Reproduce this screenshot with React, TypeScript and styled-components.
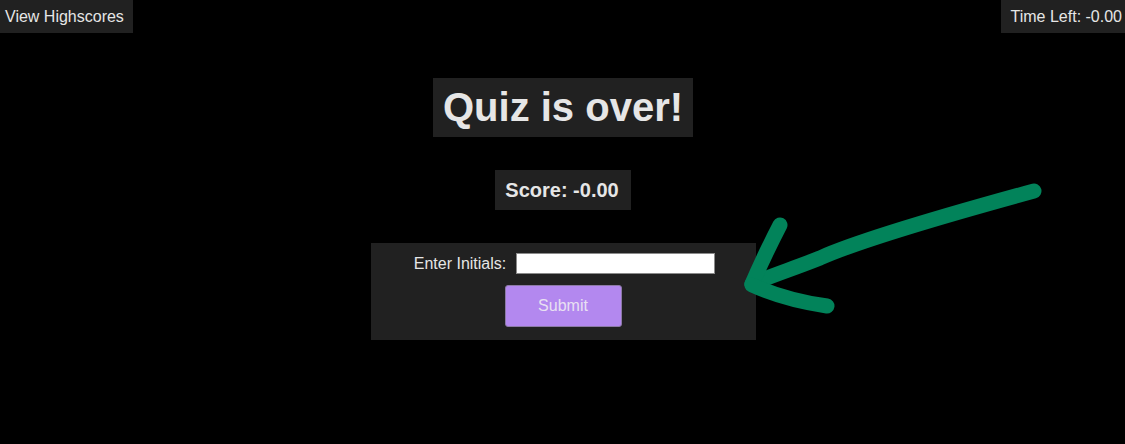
import React from "react";
import styled, { createGlobalStyle } from "styled-components";

const GlobalStyle = createGlobalStyle`
  html, body {
    margin: 0;
    padding: 0;
    background: #000;
  }
  body {
    font-family: "Liberation Sans", Arial, sans-serif;
    color: #e6e6e6;
    width: 1125px;
    height: 444px;
    overflow: hidden;
  }
`;

const Page = styled.div`
  position: relative;
  width: 1125px;
  height: 444px;
  background: #000;
`;

const Header = styled.header`
  display: flex;
  justify-content: space-between;
  align-items: flex-start;
`;

const Tag = styled.div<{ $pad: string }>`
  background: #212121;
  color: #e6e6e6;
  font-size: 16px;
  line-height: 19px;
  padding: ${(p) => p.$pad};
  white-space: nowrap;
`;

const Main = styled.main`
  display: flex;
  flex-direction: column;
  align-items: center;
`;

const Title = styled.h1`
  margin: 45px 0 0 1px;
  background: #212121;
  font-size: 40px;
  font-weight: bold;
  line-height: 47px;
  padding: 6px 10px 6px 10px;
  color: #e6e6e6;
`;

const Score = styled.h2`
  margin: 33px 0 0 1px;
  background: #212121;
  font-size: 20px;
  font-weight: bold;
  line-height: 24px;
  padding: 8px 12px 8px 10px;
  color: #e6e6e6;
`;

const Form = styled.form`
  margin: 33px 0 0 2px;
  width: 385px;
  box-sizing: border-box;
  background: #212121;
  padding: 10px 0 13px;
  display: flex;
  flex-direction: column;
  align-items: center;
  gap: 11px;
`;

const Row = styled.div`
  display: flex;
  align-items: center;
  gap: 10px;
  margin-left: 2px;
`;

const Label = styled.label`
  font-size: 16px;
  color: #e6e6e6;
`;

const Input = styled.input`
  width: 199px;
  height: 21px;
  box-sizing: border-box;
  border: 1px solid #8a8a8a;
  background: #fff;
  padding: 0 4px;
  font-family: "Liberation Sans", Arial, sans-serif;
`;

const Button = styled.button`
  width: 117px;
  height: 42px;
  background: #b388ef;
  border: 1px solid #8c7aa6;
  border-radius: 3px;
  color: #e8e0f2;
  font-family: "Liberation Sans", Arial, sans-serif;
  font-size: 16px;
  margin-right: 1px;
`;

const Arrow = styled.svg`
  position: absolute;
  left: 0;
  top: 0;
  width: 1125px;
  height: 444px;
  pointer-events: none;
`;

export default function App() {
  return (
    <Page>
      <GlobalStyle />
      <Header>
        <Tag $pad="7px 9px 7px 5px">View Highscores</Tag>
        <Tag $pad="7px 3px 7px 10px">Time Left: -0.00</Tag>
      </Header>
      <Main>
        <Title>Quiz is over!</Title>
        <Score>Score: -0.00</Score>
        <Form onSubmit={(e) => e.preventDefault()}>
          <Row>
            <Label htmlFor="initials">Enter Initials:</Label>
            <Input id="initials" type="text" />
          </Row>
          <Button type="submit">Submit</Button>
        </Form>
      </Main>
      <Arrow viewBox="0 0 1125 444">
        <g
          fill="none"
          stroke="#02835a"
          strokeWidth="15"
          strokeLinecap="round"
          strokeLinejoin="round"
        >
          <path d="M 1034 191 C 950 214, 860 240, 820 258 C 795 268, 770 276, 752 284" />
          <path d="M 780 225 Q 764 256 752 284" />
          <path d="M 752 285 Q 785 300 827 306" />
        </g>
      </Arrow>
    </Page>
  );
}
